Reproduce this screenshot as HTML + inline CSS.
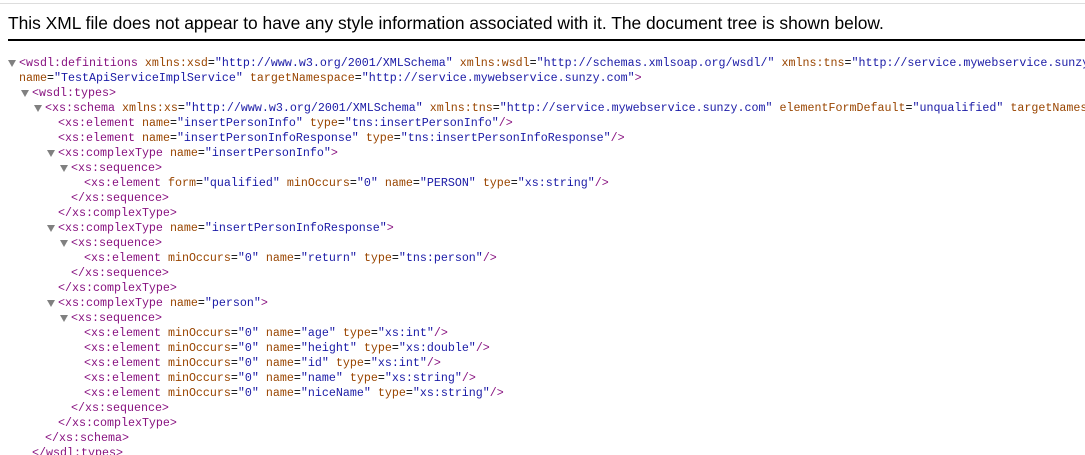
<!DOCTYPE html>
<html style="overflow:hidden"><head><style>
body{margin:0;width:1085px;height:455px;overflow:hidden;background:#fff;position:relative}
#c{position:absolute;left:0;top:0;width:1085px;height:455px;overflow:hidden}
.top{position:absolute;left:0;top:3px;width:1085px;height:1px;background:#ddd}
.hd{position:absolute;left:8px;top:13px;font:17.4px "Liberation Sans","Noto Sans CJK SC",sans-serif;color:#000;white-space:nowrap}
.rule{position:absolute;left:8px;top:39px;width:1077px;height:2px;background:#000}
.l{position:absolute;white-space:pre;font:11.67px/15px "Liberation Mono",monospace;color:#000}
.t{color:#881280}.a{color:#994500}.v{color:#1a1aa6}
.tri{position:absolute;width:0;height:0;border-left:4px solid transparent;border-right:4px solid transparent;border-top:7px solid #808080}
</style></head><body>
<div class="top"></div>
<div class="hd">This XML file does not appear to have any style information associated with it. The document tree is shown below.</div>
<div class="rule"></div>
<div id="c"></div>
<script>
const T=s=>'<span class="t">'+s+'</span>';
function at(n,v){return ' <span class="a">'+n+'</span>=<span class="v">"'+v+'"</span>';}
const lines=[
[0,1,T('&lt;wsdl:definitions')+at('xmlns:xsd','http://www.w3.org/2001/XMLSchema')+at('xmlns:wsdl','http://schemas.xmlsoap.org/wsdl/')+at('xmlns:tns','http://service.mywebservice.sunzy.com')],
[0,0,'<span class="a">name</span>=<span class="v">"TestApiServiceImplService"</span>'+at('targetNamespace','http://service.mywebservice.sunzy.com')+T('&gt;')],
[1,1,T('&lt;wsdl:types&gt;')],
[2,1,T('&lt;xs:schema')+at('xmlns:xs','http://www.w3.org/2001/XMLSchema')+at('xmlns:tns','http://service.mywebservice.sunzy.com')+at('elementFormDefault','unqualified')+at('targetNamespace','http://service.mywebservice.sunzy.com')],
[3,0,T('&lt;xs:element')+at('name','insertPersonInfo')+at('type','tns:insertPersonInfo')+T('/&gt;')],
[3,0,T('&lt;xs:element')+at('name','insertPersonInfoResponse')+at('type','tns:insertPersonInfoResponse')+T('/&gt;')],
[3,1,T('&lt;xs:complexType')+at('name','insertPersonInfo')+T('&gt;')],
[4,1,T('&lt;xs:sequence&gt;')],
[5,0,T('&lt;xs:element')+at('form','qualified')+at('minOccurs','0')+at('name','PERSON')+at('type','xs:string')+T('/&gt;')],
[4,0,T('&lt;/xs:sequence&gt;')],
[3,0,T('&lt;/xs:complexType&gt;')],
[3,1,T('&lt;xs:complexType')+at('name','insertPersonInfoResponse')+T('&gt;')],
[4,1,T('&lt;xs:sequence&gt;')],
[5,0,T('&lt;xs:element')+at('minOccurs','0')+at('name','return')+at('type','tns:person')+T('/&gt;')],
[4,0,T('&lt;/xs:sequence&gt;')],
[3,0,T('&lt;/xs:complexType&gt;')],
[3,1,T('&lt;xs:complexType')+at('name','person')+T('&gt;')],
[4,1,T('&lt;xs:sequence&gt;')],
[5,0,T('&lt;xs:element')+at('minOccurs','0')+at('name','age')+at('type','xs:int')+T('/&gt;')],
[5,0,T('&lt;xs:element')+at('minOccurs','0')+at('name','height')+at('type','xs:double')+T('/&gt;')],
[5,0,T('&lt;xs:element')+at('minOccurs','0')+at('name','id')+at('type','xs:int')+T('/&gt;')],
[5,0,T('&lt;xs:element')+at('minOccurs','0')+at('name','name')+at('type','xs:string')+T('/&gt;')],
[5,0,T('&lt;xs:element')+at('minOccurs','0')+at('name','niceName')+at('type','xs:string')+T('/&gt;')],
[4,0,T('&lt;/xs:sequence&gt;')],
[3,0,T('&lt;/xs:complexType&gt;')],
[2,0,T('&lt;/xs:schema&gt;')],
[1,0,T('&lt;/wsdl:types&gt;')]
];
let h='';
lines.forEach((l,i)=>{const y=56+15*i,x=19+13*l[0];
if(l[1])h+='<div class="tri" style="left:'+(x-11)+'px;top:'+(y+4)+'px"></div>';
h+='<div class="l" style="left:'+x+'px;top:'+y+'px">'+l[2]+'</div>';});
document.getElementById('c').innerHTML=h;
</script>
</body></html>
